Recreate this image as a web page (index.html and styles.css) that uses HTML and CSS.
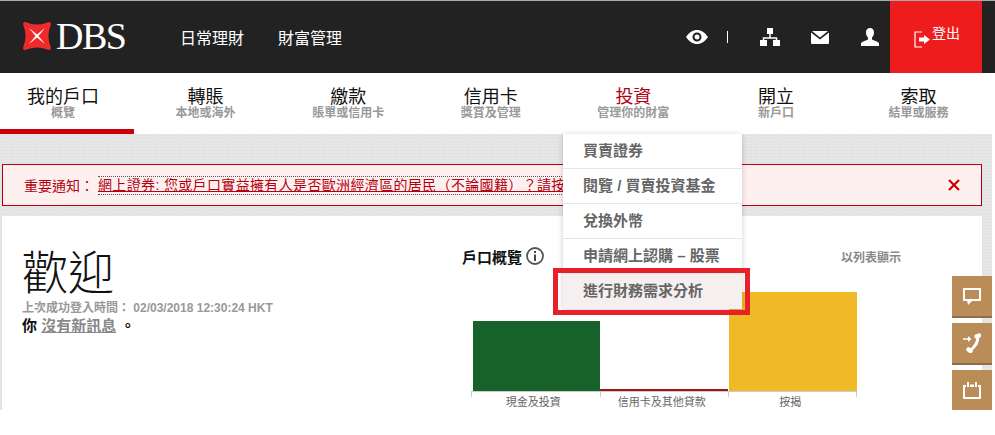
FILE: index.html
```html
<!DOCTYPE html>
<html lang="zh-Hant">
<head>
    <meta charset="UTF-8">
    <title>DBS 我的戶口</title>
    <link rel="stylesheet" href="styles.css">
</head>
<body>
    <header class="top-bar">
        <div class="logo">
            <svg class="logo-mark" viewBox="0 0 30 30" width="30" height="30">
                <path fill="#ee2a2a" d="M3 1c1 0 2 .5 3 1 3 1 6 1.500 9 1.500S21 3 24 2c1-.5 2-1 3-1s2 1 2 2-.5 2-1 3c-1 3-1.500 6-1.500 9s.5 6 1.500 9c.5 1 1 2 1 3s-1 2-2 2-2-.5-3-1c-3-1-6-1.500-9-1.500S9 27 6 28c-1 .5-2 1-3 1s-2-1-2-2 .5-2 1-3c1-3 1.500-6 1.500-9S3 9 2 6c-.5-1-1-2-1-3s1-2 2-2z"/>
                <path fill="#fff" d="M7 7l8 6.500L23 7l-6.500 8 6.500 8-8-6.500L7 23l6.500-8z"/>
            </svg>
            <span class="logo-text">DBS</span>
        </div>
        <nav class="top-links">
            <a>日常理財</a>
            <a>財富管理</a>
        </nav>
        <div class="top-icons">
            <svg class="icon-eye" viewBox="0 0 22 14" width="22" height="14">
                <path fill="#fff" fill-rule="evenodd" d="M0 7C3 2.500 7 0 11 0s8 2.500 11 7c-3 4.500-7 7-11 7S3 11.500 0 7zm11-4.500a4.500 4.500 0 1 0 0 9 4.500 4.500 0 0 0 0-9zm0 2a2.500 2.500 0 1 1 0 5 2.500 2.500 0 0 1 0-5z"/>
            </svg>
            <span class="icon-sep"></span>
            <svg class="icon-tree" viewBox="0 0 20 18" width="20" height="18">
                <path fill="#fff" d="M7 0h6v6H7zM0 12h7v6H0zM13 12h7v6h-7z"/>
                <path fill="none" stroke="#fff" stroke-width="1.500" d="M10 6v4M3.500 13v-3h13v3"/>
            </svg>
            <svg class="icon-mail" viewBox="0 0 18 13" width="18" height="13">
                <path fill="#fff" d="M1 0h16L9 6.500zM0 1.500l9 7 9-7V12a1 1 0 0 1-1 1H1a1 1 0 0 1-1-1z"/>
            </svg>
            <svg class="icon-user" viewBox="0 0 18 18" width="18" height="18">
                <path fill="#fff" d="M9 0c2.500 0 4 1.700 4 4.500 0 2-.8 4-2 5v2c2 1 5 1.500 7 3.500v3H0v-3c2-2 5-2.500 7-3.500v-2c-1.200-1-2-3-2-5C5 1.700 6.500 0 9 0z"/>
            </svg>
        </div>
        <a class="logout">
            <svg viewBox="0 0 16 17" width="16" height="17">
                <path fill="none" stroke="#fff" stroke-width="1.200" d="M8 1H1v15h7"/>
                <path fill="#fff" d="M5 6.500h5V4l6 4.500-6 4.500v-2.500H5z"/>
            </svg>
            <span>登出</span>
        </a>
    </header>

    <nav class="main-nav">
        <a class="nav-item active"><b>我的戶口</b><small>概覽</small></a>
        <a class="nav-item"><b>轉賬</b><small>本地或海外</small></a>
        <a class="nav-item"><b>繳款</b><small>賬單或信用卡</small></a>
        <a class="nav-item"><b>信用卡</b><small>獎賞及管理</small></a>
        <a class="nav-item open"><b>投資</b><small>管理你的財富</small></a>
        <a class="nav-item"><b>開立</b><small>新戶口</small></a>
        <a class="nav-item"><b>索取</b><small>結單或服務</small></a>
    </nav>

    <main class="content">
        <div class="notice">
            <span class="notice-label">重要通知：</span>
            <a class="notice-link">網上證券: 您或戶口實益擁有人是否歐洲經濟區的居民（不論國籍）？請按</a>
            <svg class="notice-close" viewBox="0 0 12 12" width="12" height="12">
                <path stroke="#c00" stroke-width="2.200" d="M1 1l10 10M11 1L1 11"/>
            </svg>
        </div>

        <section class="card">
            <div class="welcome">
                <h1>歡迎</h1>
                <p class="last-login">上次成功登入時間： 02/03/2018 12:30:24 HKT</p>
                <p class="messages">你 <a>沒有新訊息</a> 。</p>
            </div>
            <div class="overview">
                <div class="overview-head">
                    <h2>戶口概覽</h2>
                    <svg viewBox="0 0 18 18" width="18" height="18">
                        <circle cx="9" cy="9" r="8" fill="none" stroke="#555" stroke-width="1.800"/>
                        <path fill="#444" d="M8 4h2v2H8zM8 7.500h2V14H8z"/>
                    </svg>
                    <a class="list-view">以列表顯示</a>
                </div>
                <div class="chart">
                    <div class="bar-col"><div class="bar bar-green"></div></div>
                    <div class="bar-col"><div class="bar bar-red"></div></div>
                    <div class="bar-col"><div class="bar bar-yellow"></div></div>
                </div>
                <div class="chart-labels">
                    <span>現金及投資</span>
                    <span>信用卡及其他貸款</span>
                    <span>按揭</span>
                </div>
            </div>
        </section>
    </main>

    <ul class="dropdown">
        <li>買賣證券</li>
        <li>閱覽 / 買賣投資基金</li>
        <li>兌換外幣</li>
        <li>申請網上認購 – 股票</li>
        <li class="highlight">進行財務需求分析</li>
    </ul>
    <div class="callout"></div>

    <div class="side-buttons">
        <a class="side-btn">
            <svg viewBox="0 0 18 17" width="18" height="17">
                <path fill="none" stroke="#fff" stroke-width="2" d="M1 1h16v11H1z"/>
                <path fill="#fff" d="M4 12h6l-5 5z"/>
            </svg>
        </a>
        <a class="side-btn">
            <svg viewBox="0 0 18 20" width="18" height="20">
                <path fill="none" stroke="#fff" stroke-width="3" d="M15 3c0 6-3 11-8 14.500"/>
                <path fill="none" stroke="#fff" stroke-width="4.500" stroke-linecap="round" d="M13.500 3.500l2.500-1M5.500 16.500l2 1.500"/>
                <path fill="none" stroke="#fff" stroke-width="1.500" d="M0 6h5"/>
                <path fill="#fff" d="M5 3l3.500 3L5 9z"/>
            </svg>
        </a>
        <a class="side-btn flat">
            <svg viewBox="0 0 18 17" width="18" height="17">
                <path fill="none" stroke="#fff" stroke-width="2" d="M1 4v12h16V4"/>
                <path fill="#fff" d="M0 3h3v2H0zM15 3h3v2h-3zM7 2.500h4v2.500H7zM4 0h2v5H4zM12 0h2v5h-2z"/>
            </svg>
        </a>
    </div>
</body>
</html>
```

FILE: styles.css
```css
* {
    box-sizing: border-box;
}

html, body {
    height: 100%;
}

body {
    margin: 0;
    background: #fff;
    overflow: hidden;
    position: relative;
    font-family: "Liberation Sans", "Noto Sans CJK TC", sans-serif;
    color: #111;
}

a {
    color: inherit;
}

/* top dark bar */
.top-bar {
    display: flex;
    align-items: center;
    height: 73px;
    background: #222;
    border-top: 1px solid #aaa;
    padding-left: 22px;
    padding-right: 13px;
}

.logo {
    display: flex;
    align-items: center;
    width: 158px;
    margin-top: -3px;
}

.logo-mark {
    flex: none;
}

.logo-text {
    font-family: "Liberation Serif", serif;
    font-size: 38px;
    line-height: 1;
    color: #fff;
    letter-spacing: -1.500px;
    margin-left: 4px;
}

.top-links {
    display: flex;
    gap: 34px;
    font-size: 16px;
    color: #fff;
}

.top-icons {
    display: flex;
    align-items: center;
    margin-left: auto;
    margin-right: 11px;
}

.icon-sep {
    width: 1px;
    height: 12px;
    background: #fff;
    margin: 0 32px 0 19px;
}

.icon-tree {
    margin-right: 31px;
}

.icon-mail {
    margin-right: 32px;
}

.logout {
    display: flex;
    align-items: flex-start;
    justify-content: center;
    gap: 2px;
    width: 92px;
    height: 72px;
    padding-top: 24px;
    padding-left: 2px;
    background: #ee1c1c;
    color: #fff;
    font-size: 14px;
    line-height: 16px;
}

.logout svg {
    margin-top: 6px;
}

/* main navigation */
.main-nav {
    display: grid;
    grid-template-columns: repeat(7, 142.600px);
    height: 61px;
    width: 1003.300px;
    margin-left: -8.300px;
    overflow: hidden;
}

.nav-item {
    display: flex;
    flex-direction: column;
    align-items: center;
    padding-top: 14px;
    height: 61px;
    border-bottom: 5px solid transparent;
}

.nav-item b {
    font-size: 18px;
    font-weight: 400;
    line-height: 20px;
}

.nav-item small {
    font-size: 12px;
    font-weight: 700;
    line-height: 12px;
    color: #999;
}

.nav-item.active {
    border-bottom-color: #c8000c;
}

.nav-item.open b {
    color: #b3000f;
}

/* grey page area */
.content {
    width: 992px;
    height: 276px;
    padding: 30px 10px 0 2px;
    background-color: #e6e6e6;
    background-image: radial-gradient(#dadada 0.500px, transparent 0.800px);
    background-size: 3px 3px;
}

.notice {
    display: flex;
    align-items: center;
    height: 42px;
    padding: 0 21px 0 21px;
    background: #fff0f0;
    border: 1px solid #b3000f;
    white-space: nowrap;
    overflow: hidden;
}

.notice-label {
    font-size: 14px;
    color: #b3000f;
    margin-right: 4px;
}

.notice-link {
    font-size: 14px;
    letter-spacing: 0.350px;
    line-height: 17px;
    color: #b3000f;
    text-decoration: underline;
    border-top: 1px dotted #555;
    border-bottom: 1px dotted #555;
}

.notice-close {
    flex: none;
    margin-left: auto;
}

.card {
    display: flex;
    height: 194px;
    margin-top: 10px;
    padding: 31px 0 0 20px;
    background: #fff;
}

.welcome {
    width: 440px;
}

.welcome h1 {
    margin: 0;
    font-size: 46px;
    font-weight: 300;
    line-height: 52px;
    color: #111;
}

.last-login {
    margin: 1px 0 0;
    font-size: 12px;
    font-weight: 700;
    line-height: 16px;
    color: #999;
}

.messages {
    margin: 0;
    font-size: 15px;
    font-weight: 700;
    line-height: 20px;
}

.messages a {
    color: #888;
    text-decoration: underline;
}

.overview {
    width: 439px;
}

.overview-head {
    display: flex;
    align-items: center;
    height: 18px;
    gap: 4px;
}

.overview-head h2 {
    margin: 0;
    font-size: 15px;
    font-weight: 700;
}

.list-view {
    margin-left: auto;
    font-size: 12px;
    font-weight: 700;
    color: #888;
}

.chart {
    display: flex;
    align-items: flex-end;
    height: 118px;
    width: 385px;
    margin-left: 11px;
    margin-top: 8px;
}

.bar-col {
    width: 128px;
    flex: none;
}

.bar {
    width: 127px;
}

.bar-green {
    height: 70px;
    background: #17622b;
}

.bar-red {
    height: 2px;
    width: 128px;
    margin-left: -1px;
    background: #a5121a;
}

.bar-yellow {
    height: 99px;
    width: 128px;
    background: #f0ba26;
}

.chart-labels {
    display: flex;
    width: 386px;
    margin-left: 9px;
    border-top: 1px solid #ccc;
    font-size: 11px;
    line-height: 13px;
    color: #666;
}

.chart-labels span {
    width: 128.500px;
    height: 16px;
    padding: 4px 4px 0 0;
    text-align: center;
    white-space: nowrap;
    background:
        linear-gradient(#ccc, #ccc) left top / 1px 5px no-repeat;
}

.chart-labels span:last-child {
    background:
        linear-gradient(#ccc, #ccc) left top / 1px 5px no-repeat,
        linear-gradient(#ccc, #ccc) right top / 1px 5px no-repeat;
}

/* investing dropdown, lies over the page */
.dropdown {
    position: absolute;
    left: 563px;
    top: 134px;
    width: 179px;
    margin: 0;
    padding: 0;
    list-style: none;
    background: #fff;
    box-shadow: 0 1px 6px rgba(0, 0, 0, 0.2);
}

.dropdown li {
    height: 35px;
    padding-left: 20px;
    border-bottom: 1px solid #e6e6e6;
    font-size: 15px;
    font-weight: 700;
    line-height: 34px;
    color: #666;
    white-space: nowrap;
}

.dropdown li.highlight {
    background: #f5f0ef;
    border-bottom: 0;
}

.callout {
    position: absolute;
    left: 553px;
    top: 268px;
    width: 197px;
    height: 47px;
    border: 5px solid #e8202a;
}

/* floating side buttons */
.side-buttons {
    position: absolute;
    left: 952px;
    top: 276px;
    display: flex;
    flex-direction: column;
    gap: 5px;
}

.side-btn {
    display: flex;
    align-items: center;
    justify-content: center;
    width: 40px;
    height: 42px;
    background: #b98c58;
    border-bottom: 2px solid #8f6d45;
}

.side-btn.flat {
    height: 40px;
    border-bottom: 0;
}
```
